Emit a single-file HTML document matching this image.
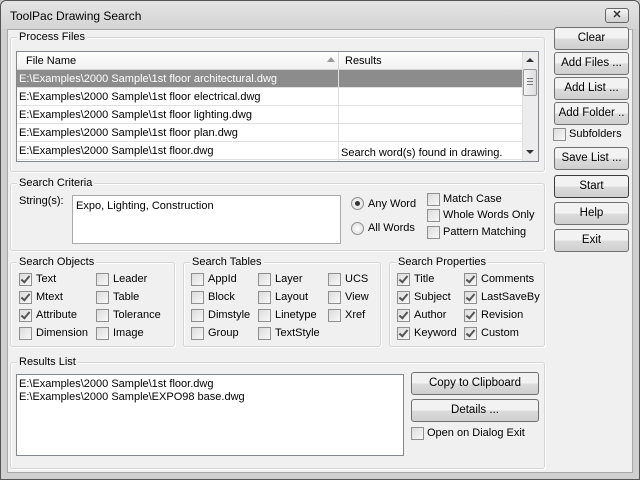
<!DOCTYPE html>
<html><head><meta charset="utf-8"><style>
*{box-sizing:border-box;margin:0;padding:0}
body{width:640px;height:480px;overflow:hidden;background:#c8c8c8;font-family:"Liberation Sans",sans-serif;font-size:11px;color:#000;position:relative}
.win{position:absolute;left:0;top:0;width:640px;height:480px;border:1px solid #555;border-radius:6px 6px 0 0;background:linear-gradient(#e4e4e4,#d4d4d4 28px,#cfcfcf 28px)}
.client{position:absolute;left:7px;top:29px;width:626px;height:444px;background:#f0f0f0;border:1px solid #a8a8a8}
.a{position:absolute}
.title{position:absolute;left:9px;top:8px;font-size:12px}
.close{position:absolute;left:604px;top:7px;width:24px;height:15px;border:1px solid #666;border-radius:3px;background:linear-gradient(#f4f4f4,#cfcfcf);font-size:11px;font-weight:bold;text-align:center;line-height:13px;color:#333}
.grp{position:absolute;border:1px solid #d5d5d5;border-radius:3px;box-shadow:inset 1px 1px 0 #fff,1px 1px 0 #fff}
.grp>.lbl{position:absolute;left:6px;top:-8px;background:#f0f0f0;padding:0 2px;line-height:14px}
.btn{position:absolute;width:75px;height:23px;border:1px solid #707070;border-radius:3px;background:linear-gradient(#f2f2f2 50%,#dcdcdc 50%,#cfcfcf);text-align:center;line-height:21px;font-size:11.5px}
.cb{position:absolute;width:13px;height:13px;border:1px solid #8f8f8f;background:linear-gradient(135deg,#dcdcdc,#f8f8f8)}
.cb.on::after{content:"";position:absolute;left:3px;top:0px;width:3px;height:7px;border:solid #555;border-width:0 2px 2px 0;transform:rotate(40deg)}
.t{position:absolute;white-space:nowrap;line-height:14px;font-size:11px}
.list{position:absolute;background:#fff;border:1px solid #828790}
.row{position:absolute;left:0;height:18px;line-height:18px;padding-left:2px;white-space:nowrap;font-size:11px;border-bottom:1px solid #e0e0e0;width:505px}
.rb{position:absolute;width:13px;height:13px;border-radius:50%;border:1px solid #8f8f8f;background:radial-gradient(#fff,#d8d8d8)}
</style></head><body>
<div class="win">
<div class="title">ToolPac Drawing Search</div>
<div class="close">✕</div>
</div>
<div class="client"></div>

<div class="grp" style="left:10px;top:37px;width:535px;height:135px"><div class="lbl">Process Files</div></div>
<div class="list" style="left:16px;top:51px;width:523px;height:111px;overflow:hidden">
 <div class="a" style="left:0;top:0;width:505px;height:18px;background:linear-gradient(#fff,#f0f0f0);border-bottom:1px solid #d5d5d5"></div>
 <div class="t" style="left:9px;top:2px">File Name</div>
 <div class="a" style="left:310px;top:5px;width:0;height:0;border-left:4px solid transparent;border-right:4px solid transparent;border-bottom:5px solid #999"></div>
 <div class="a" style="left:321px;top:0;width:1px;height:18px;background:#d5d5d5"></div>
 <div class="t" style="left:328px;top:2px">Results</div>
 <div class="row" style="top:18px;background:#8c8c8c;color:#fff">E:\Examples\2000 Sample\1st floor architectural.dwg</div>
 <div class="row" style="top:36px">E:\Examples\2000 Sample\1st floor electrical.dwg</div>
 <div class="row" style="top:54px">E:\Examples\2000 Sample\1st floor lighting.dwg</div>
 <div class="row" style="top:72px">E:\Examples\2000 Sample\1st floor plan.dwg</div>
 <div class="row" style="top:90px">E:\Examples\2000 Sample\1st floor.dwg</div>
 <div class="row" style="top:108px"></div>
 <div class="a" style="left:321px;top:18px;width:1px;height:92px;background:#e0e0e0"></div>
 <div class="t" style="left:324px;top:94px">Search word(s) found in drawing.</div>
 <div class="a" style="left:505px;top:0;width:16px;height:109px;background:#ececec;border-left:1px solid #ddd"></div>
 <div class="a" style="left:509px;top:6px;border-left:4px solid transparent;border-right:4px solid transparent;border-bottom:4px solid #333"></div>
 <div class="a" style="left:509px;top:98px;border-left:4px solid transparent;border-right:4px solid transparent;border-top:4px solid #333"></div>
 <div class="a" style="left:506px;top:17px;width:14px;height:27px;border:1px solid #999;border-radius:2px;background:linear-gradient(90deg,#f4f4f4,#dcdcdc)"></div>
 <div class="a" style="left:510px;top:26px;width:6px;height:7px;border-top:1px solid #777;border-bottom:1px solid #777"></div>
 <div class="a" style="left:510px;top:29px;width:6px;height:1px;background:#777"></div>
</div>

<div class="btn" style="left:554px;top:27px">Clear</div>
<div class="btn" style="left:554px;top:52px">Add Files ...</div>
<div class="btn" style="left:554px;top:77px">Add List ...</div>
<div class="btn" style="left:554px;top:102px">Add Folder ..</div>
<div class="cb" style="left:553px;top:128px"></div><div class="t" style="left:569px;top:127px">Subfolders</div>
<div class="btn" style="left:554px;top:147px">Save List ...</div>
<div class="btn" style="left:554px;top:175px;border-color:#3c3c3c">Start</div>
<div class="btn" style="left:554px;top:202px">Help</div>
<div class="btn" style="left:554px;top:229px">Exit</div>

<div class="grp" style="left:10px;top:183px;width:535px;height:68px"><div class="lbl">Search Criteria</div></div>
<div class="t" style="left:19px;top:194px">String(s):</div>
<div class="list" style="left:72px;top:195px;width:269px;height:49px;border-color:#aaa"><div class="t" style="left:3px;top:3px">Expo, Lighting, Construction</div></div>
<div class="rb" style="left:351px;top:197px"><div class="a" style="left:3px;top:3px;width:5px;height:5px;border-radius:50%;background:#333"></div></div>
<div class="t" style="left:368px;top:197px">Any Word</div>
<div class="rb" style="left:351px;top:222px"></div>
<div class="t" style="left:368px;top:221px">All Words</div>
<div class="cb" style="left:427px;top:193px"></div><div class="t" style="left:443px;top:192px">Match Case</div>
<div class="cb" style="left:427px;top:209px"></div><div class="t" style="left:443px;top:208px">Whole Words Only</div>
<div class="cb" style="left:427px;top:226px"></div><div class="t" style="left:443px;top:225px">Pattern Matching</div>

<div class="grp" style="left:10px;top:262px;width:165px;height:85px"><div class="lbl">Search Objects</div></div>
<div class="cb on" style="left:19px;top:273px"></div><div class="t" style="left:36px;top:272px">Text</div>
<div class="cb on" style="left:19px;top:291px"></div><div class="t" style="left:36px;top:290px">Mtext</div>
<div class="cb on" style="left:19px;top:309px"></div><div class="t" style="left:36px;top:308px">Attribute</div>
<div class="cb" style="left:19px;top:327px"></div><div class="t" style="left:36px;top:326px">Dimension</div>
<div class="cb" style="left:96px;top:273px"></div><div class="t" style="left:113px;top:272px">Leader</div>
<div class="cb" style="left:96px;top:291px"></div><div class="t" style="left:113px;top:290px">Table</div>
<div class="cb" style="left:96px;top:309px"></div><div class="t" style="left:113px;top:308px">Tolerance</div>
<div class="cb" style="left:96px;top:327px"></div><div class="t" style="left:113px;top:326px">Image</div>

<div class="grp" style="left:183px;top:262px;width:198px;height:85px"><div class="lbl">Search Tables</div></div>
<div class="cb" style="left:191px;top:273px"></div><div class="t" style="left:208px;top:272px">AppId</div>
<div class="cb" style="left:191px;top:291px"></div><div class="t" style="left:208px;top:290px">Block</div>
<div class="cb" style="left:191px;top:309px"></div><div class="t" style="left:208px;top:308px">Dimstyle</div>
<div class="cb" style="left:191px;top:327px"></div><div class="t" style="left:208px;top:326px">Group</div>
<div class="cb" style="left:258px;top:273px"></div><div class="t" style="left:275px;top:272px">Layer</div>
<div class="cb" style="left:258px;top:291px"></div><div class="t" style="left:275px;top:290px">Layout</div>
<div class="cb" style="left:258px;top:309px"></div><div class="t" style="left:275px;top:308px">Linetype</div>
<div class="cb" style="left:258px;top:327px"></div><div class="t" style="left:275px;top:326px">TextStyle</div>
<div class="cb" style="left:328px;top:273px"></div><div class="t" style="left:345px;top:272px">UCS</div>
<div class="cb" style="left:328px;top:291px"></div><div class="t" style="left:345px;top:290px">View</div>
<div class="cb" style="left:328px;top:309px"></div><div class="t" style="left:345px;top:308px">Xref</div>

<div class="grp" style="left:389px;top:262px;width:156px;height:85px"><div class="lbl">Search Properties</div></div>
<div class="cb on" style="left:397px;top:273px"></div><div class="t" style="left:414px;top:272px">Title</div>
<div class="cb on" style="left:397px;top:291px"></div><div class="t" style="left:414px;top:290px">Subject</div>
<div class="cb on" style="left:397px;top:309px"></div><div class="t" style="left:414px;top:308px">Author</div>
<div class="cb on" style="left:397px;top:327px"></div><div class="t" style="left:414px;top:326px">Keyword</div>
<div class="cb on" style="left:464px;top:273px"></div><div class="t" style="left:481px;top:272px">Comments</div>
<div class="cb on" style="left:464px;top:291px"></div><div class="t" style="left:481px;top:290px">LastSaveBy</div>
<div class="cb on" style="left:464px;top:309px"></div><div class="t" style="left:481px;top:308px">Revision</div>
<div class="cb on" style="left:464px;top:327px"></div><div class="t" style="left:481px;top:326px">Custom</div>

<div class="grp" style="left:10px;top:362px;width:535px;height:107px"><div class="lbl">Results List</div></div>
<div class="list" style="left:16px;top:374px;width:388px;height:82px">
 <div class="t" style="left:2px;top:2px">E:\Examples\2000 Sample\1st floor.dwg</div>
 <div class="t" style="left:2px;top:15px">E:\Examples\2000 Sample\EXPO98 base.dwg</div>
</div>
<div class="btn" style="left:411px;top:372px;width:128px">Copy to Clipboard</div>
<div class="btn" style="left:411px;top:399px;width:128px">Details ...</div>
<div class="cb" style="left:411px;top:427px"></div><div class="t" style="left:427px;top:426px">Open on Dialog Exit</div>
</body></html>
